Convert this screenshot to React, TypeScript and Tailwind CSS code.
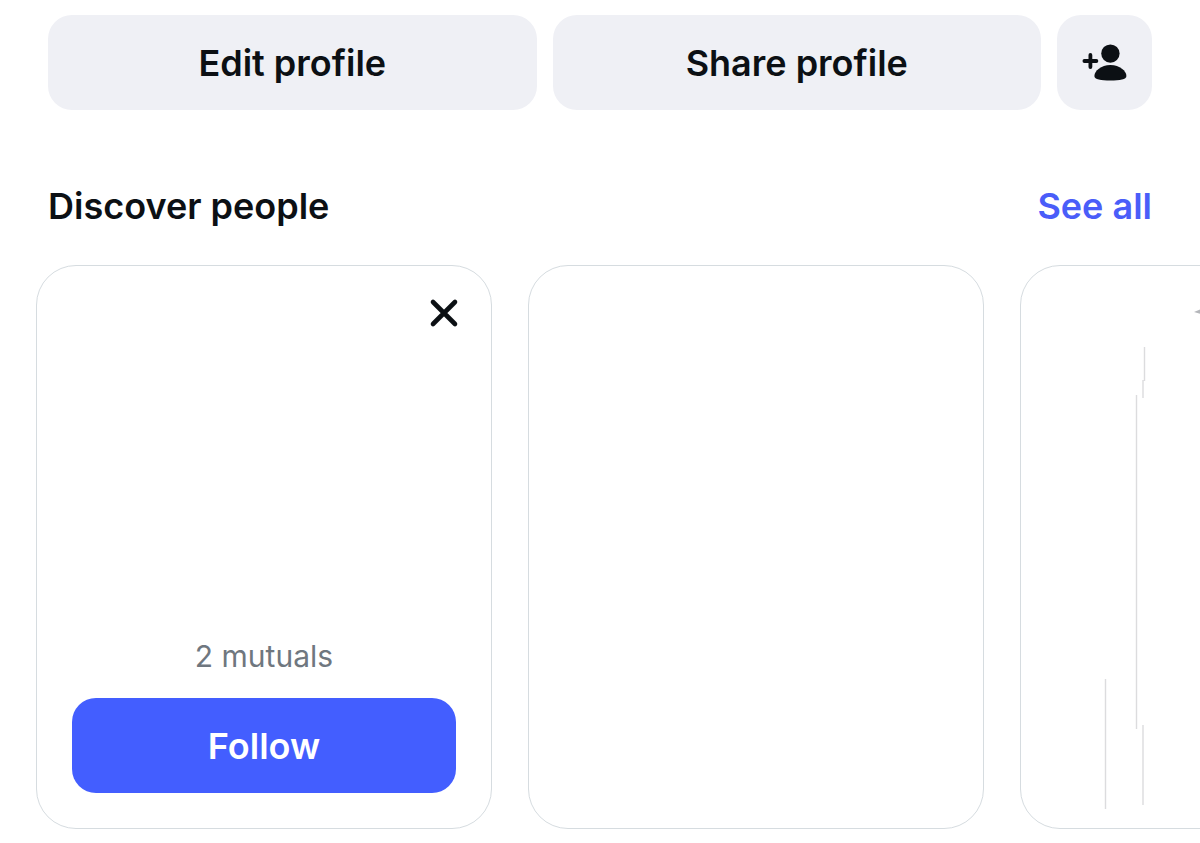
const pillClass =
  "flex h-[95px] items-center justify-center rounded-3xl bg-[#eff0f5] text-4xl font-semibold text-[#0c1014]";

const cardClass = "h-[564px] w-[456px] shrink-0 rounded-[40px] border border-[#d6dce0]";

const AddPersonIcon = () => (
  <svg width="46" height="40" viewBox="0 0 46 40" fill="currentColor" aria-hidden="true">
    <circle cx="28.4" cy="10.6" r="9.2" />
    <path d="M12.4 33C12.4 28 19 22 28.4 22S44.4 28 44.4 33C44.4 36.5 38 37.6 28.4 37.6S12.4 36.5 12.4 33Z" />
    <path d="M8.4 12V24M2.4 18H14.4" stroke="currentColor" strokeWidth="3.8" strokeLinecap="round" />
  </svg>
);

const CloseIcon = () => (
  <svg width="30" height="30" viewBox="0 0 30 30" fill="none" aria-hidden="true">
    <path d="M4 4L26 26M26 4L4 26" stroke="currentColor" strokeWidth="4.6" strokeLinecap="round" />
  </svg>
);

// Faint strokes inside the partly visible card
const CardStrokes = () => (
  <svg width="180" height="562" viewBox="0 0 180 562" fill="none" aria-hidden="true">
    <g stroke="#dcdcde" strokeWidth="1.4">
      <path d="M123.5 81V115M122 114V132M115.5 129V463M84.5 413V543M122 459V539" />
    </g>
    <path d="M173 46L180 43V48Z" fill="#b4b6ba" />
  </svg>
);

const App = () => {
  return (
    <div className="overflow-hidden bg-white pb-4 pt-[15px] font-['Inter',sans-serif] text-[#0c1014]">
      {/* Profile actions */}
      <div className="flex gap-4 px-12">
        <button type="button" className={`${pillClass} flex-1`}>Edit profile</button>
        <button type="button" className={`${pillClass} flex-1`}>Share profile</button>
        <button type="button" aria-label="Add people" className={`${pillClass} w-[95px] shrink-0`}>
          <AddPersonIcon />
        </button>
      </div>

      <section className="pt-[76px]">
        <div className="flex items-center justify-between px-12">
          <h2 className="text-4xl font-semibold">Discover people</h2>
          <a href="#all" className="text-4xl font-semibold text-[#4a5df9]">See all</a>
        </div>

        {/* Suggestions */}
        <div className="flex gap-9 overflow-hidden pl-9 pt-[39px]">
          <article className={`${cardClass} flex flex-col pb-[35px] pt-8`}>
            <button type="button" aria-label="Dismiss" className="mr-8 self-end">
              <CloseIcon />
            </button>
            <p className="mt-auto text-center text-3xl text-[#6f777f]">2 mutuals</p>
            <button type="button" className="mx-[35px] mt-6 h-[95px] rounded-3xl bg-[#435eff] text-4xl font-semibold text-white">
              Follow
            </button>
          </article>
          <article className={cardClass} />
          <article className={cardClass}>
            <CardStrokes />
          </article>
        </div>
      </section>
    </div>
  );
};

export default App;
